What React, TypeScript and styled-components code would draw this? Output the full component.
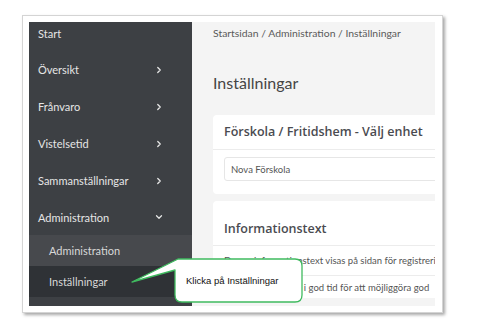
import styled, { createGlobalStyle } from "styled-components";
import { ChevronRight, ChevronDown } from "lucide-react";

const GlobalStyle = createGlobalStyle`
  body {
    margin: 0;
    background: #ffffff;
    font-family: "Lato", "Noto Sans", sans-serif;
  }
`;

const Page = styled.div`
  position: relative;
  width: 494px;
  height: 327px;
  padding: 15px 0 0 22px;
  box-sizing: border-box;
`;

const Frame = styled.div`
  width: 421px;
  height: 298px;
  box-sizing: border-box;
  padding: 6px 7px 6px 6px;
  background: #fff;
  border: 1px solid #d4d4d4;
  box-shadow: 2px 2px 3px rgba(0, 0, 0, 0.35);
`;

const Window = styled.div`
  display: flex;
  width: 100%;
  height: 100%;
  overflow: hidden;
`;

const Sidebar = styled.nav`
  display: flex;
  flex-direction: column;
  width: 163px;
  flex-shrink: 0;
  background: #3d4044;
`;

const StartItem = styled.div`
  height: 22px;
  margin-bottom: 7px;
  padding-left: 9px;
  display: flex;
  align-items: center;
  font-size: 11px;
  color: #e6e6e6;
`;

const MenuItem = styled.div<{ $h?: number }>`
  height: ${(p) => p.$h ?? 37}px;
  padding: 0 28px 0 9px;
  display: flex;
  align-items: center;
  justify-content: space-between;
  font-size: 11px;
  color: #e6e6e6;
`;

const SubMenu = styled.div`
  background: #47494d;
`;

const SubItem = styled.div<{ $active?: boolean }>`
  height: 31px;
  padding-left: 20px;
  display: flex;
  align-items: center;
  font-size: 11px;
  color: #d8d8d8;
  background: ${(p) => (p.$active ? "#2f3236" : "transparent")};
`;

const Main = styled.main`
  flex: 1;
  min-width: 0;
  background: #f4f4f4;
  padding-left: 21px;
  overflow: hidden;
`;

const Breadcrumb = styled.div`
  line-height: 22px;
  font-size: 10.4px;
  color: #5a5a5a;
  white-space: nowrap;
`;

const Title = styled.h1`
  margin: 29px 0 22px;
  line-height: 20px;
  font-size: 16px;
  font-weight: 400;
  color: #454545;
`;

const Card = styled.section`
  width: 320px;
  background: #fff;
  border-radius: 4px;
  margin-bottom: 7px;
`;

const CardHeader = styled.div<{ $top?: number; $h: number }>`
  height: ${(p) => p.$h}px;
  box-sizing: border-box;
  padding: ${(p) => p.$top ?? 0}px 11px 0;
  display: flex;
  align-items: ${(p) => (p.$top ? "flex-start" : "center")};
  line-height: 20px;
  border-bottom: 1px solid #ececec;
  font-family: "Open Sans", "Lato", sans-serif;
  font-size: 12.5px;
  font-weight: 600;
  color: #4a4b50;
  white-space: nowrap;
`;

const CardBody = styled.div`
  padding: 7px 11px 13px;
`;

const Select = styled.div`
  height: 24px;
  box-sizing: border-box;
  border: 1px solid #e6e6e6;
  border-radius: 3px;
  padding-left: 6px;
  display: flex;
  align-items: center;
  font-size: 9.5px;
  color: #555;
`;

const TextRow = styled.div<{ $size: number; $h: number; $line?: boolean }>`
  height: ${(p) => p.$h}px;
  box-sizing: border-box;
  padding-left: 11px;
  display: flex;
  align-items: center;
  font-size: ${(p) => p.$size}px;
  color: #555;
  white-space: nowrap;
  overflow: hidden;
  border-bottom: ${(p) => (p.$line ? "1px solid #ececec" : "none")};
`;

const Callout = styled.div`
  position: absolute;
  left: 130px;
  top: 255px;
  width: 175px;
  height: 50px;
  box-sizing: border-box;
  padding: 4px 0 3px 56px;
  display: flex;
  align-items: center;
`;

const CalloutShape = styled.svg`
  position: absolute;
  left: 0;
  top: 0;
`;

const CalloutText = styled.span`
  position: relative;
  font-family: "Liberation Sans", Arial, sans-serif;
  font-size: 9.5px;
  color: #111;
`;

const menu = ["Översikt", "Frånvaro", "Vistelsetid", "Sammanställningar"];

export default function App() {
  return (
    <>
      <GlobalStyle />
      <Page>
        <Frame>
          <Window>
            <Sidebar>
              <StartItem>Start</StartItem>
              {menu.map((m) => (
                <MenuItem key={m}>
                  {m}
                  <ChevronRight size={10} strokeWidth={3} color="#e6e6e6" />
                </MenuItem>
              ))}
              <MenuItem $h={36}>
                Administration
                <ChevronDown size={10} strokeWidth={3} color="#e6e6e6" />
              </MenuItem>
              <SubMenu>
                <SubItem>Administration</SubItem>
                <SubItem $active>Inställningar</SubItem>
              </SubMenu>
            </Sidebar>
            <Main>
              <Breadcrumb>Startsidan / Administration / Inställningar</Breadcrumb>
              <Title>Inställningar</Title>
              <Card>
                <CardHeader $h={35}>Förskola / Fritidshem - Välj enhet</CardHeader>
                <CardBody>
                  <Select>Nova Förskola</Select>
                </CardBody>
              </Card>
              <Card>
                <CardHeader $h={45} $top={18}>Informationstext</CardHeader>
                <TextRow $size={9.5} $h={30} $line>
                  Denna informationstext visas på sidan för registrering
                </TextRow>
                <TextRow $size={9.5} $h={22}>
                  Vänligen registrera i god tid för att möjliggöra god
                </TextRow>
              </Card>
            </Main>
          </Window>
        </Frame>
        <Callout>
          <CalloutShape width="175" height="50" viewBox="0 0 175 50">
            <path
              d="M48 4 L165 4 Q172 4 172 11 L172 40 Q172 47 165 47 L52 47 Q45 47 45 40 L45 15 L2 27 Z"
              fill="#fff"
              stroke="#3fba5f"
              strokeWidth="1.3"
              strokeLinejoin="round"
            />
          </CalloutShape>
          <CalloutText>Klicka på Inställningar</CalloutText>
        </Callout>
      </Page>
    </>
  );
}
